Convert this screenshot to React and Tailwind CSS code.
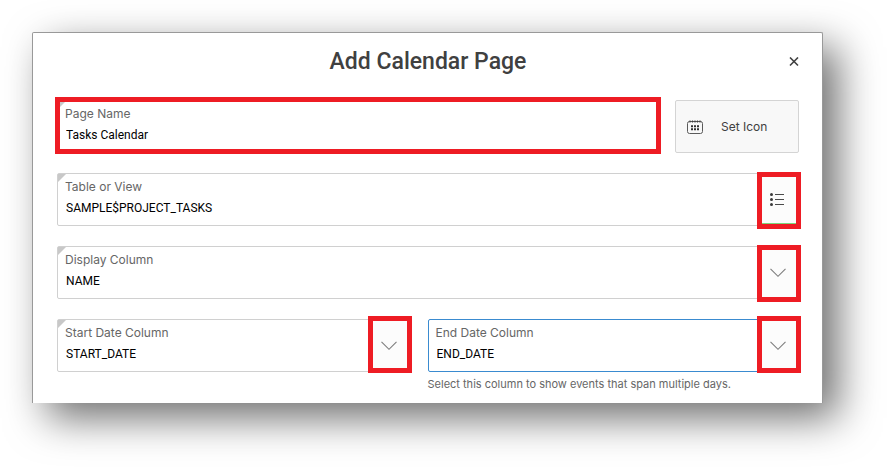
import React from 'react';

const sans = "font-['Inter','Liberation_Sans',sans-serif]";
const roboto = "font-['Roboto','Liberation_Sans',sans-serif]";

function Chevron() {
  return (
    <svg width="16" height="10" viewBox="0 0 16 10" fill="none" stroke="#7d7d7d" strokeWidth="1.1" aria-hidden="true">
      <path d="M0.5 0.8 L8 8.3 L15.5 0.8" />
    </svg>
  );
}

function ListIcon() {
  return (
    <svg width="16" height="14" viewBox="0 0 16 14" aria-hidden="true">
      <g fill="#3a3a3a">
        <circle cx="1.5" cy="2.5" r="1.5" />
        <circle cx="1.5" cy="7.5" r="1.5" />
        <circle cx="1.5" cy="12.5" r="1.5" />
      </g>
      <path d="M5 2.5H14M5 7.5H14M5 12.5H14" stroke="#4a4a4a" strokeWidth="1" fill="none" />
    </svg>
  );
}

function CalendarIcon() {
  return (
    <svg width="16" height="14" viewBox="0 0 16 14" fill="none" aria-hidden="true">
      <rect x="0.5" y="1.5" width="15" height="12" rx="2" stroke="#5a5a5a" strokeWidth="1" />
      <path d="M3 0.5V2.6M5.5 0.5V2.6M8 0.5V2.6M10.5 0.5V2.6M13 0.5V2.6" stroke="#404040" strokeWidth="1.2" />
      <path d="M4 6.2H12M4 9.2H12" stroke="#303030" strokeWidth="2" strokeDasharray="2 1" />
    </svg>
  );
}

function Highlight({ className }) {
  return <span aria-hidden="true" className={`pointer-events-none absolute border-5 border-[#ee1c24] ${className}`} />;
}

function Field({ id, label, value, kind = 'text', required = true, active = false, addon, addonStyle = '', highlight, help }) {
  const control = `${roboto} block h-6 w-full appearance-none bg-transparent px-2 text-xs text-black outline-none`;
  return (
    <div className="min-w-0 flex-1">
      <div
        className={`relative flex rounded-xs border bg-white ${
          active ? 'border-[#3a8bd0]' : 'border-[#d0d0d0]'
        }`}
      >
        {required && (
          <span
            aria-hidden="true"
            className="absolute top-0 left-0 border-t-8 border-r-8 border-t-[#c8c8c8] border-r-transparent"
          />
        )}
        <div className="flex min-w-0 flex-1 flex-col gap-px py-[5px]">
          <label htmlFor={id} className="block px-[7px] text-xs leading-4 text-[#666]">
            {label}
          </label>
          {kind === 'select' ? (
            <select id={id} defaultValue={value} className={control}>
              <option>{value}</option>
            </select>
          ) : (
            <input id={id} type="text" defaultValue={value} className={control} />
          )}
        </div>
        {addon && (
          <button
            type="button"
            aria-label={`Choose ${label}`}
            className={`flex w-10 items-center justify-center bg-[#fcfcfc] ${addonStyle}`}
          >
            {addon}
          </button>
        )}
        {highlight && <Highlight className={highlight} />}
      </div>
      {help && <p className="mt-1 text-[11px] leading-4 text-[#666]">{help}</p>}
    </div>
  );
}

const upperHighlight = '-top-0.5 -right-[3px] -bottom-1 w-11';
const lowerHighlight = '-top-1 -right-[3px] -bottom-0.5 w-11';

export default function App() {
  return (
    <main className={`${sans} overflow-hidden bg-white pt-8 pr-[65px] pb-16 pl-8`}>
      <section
        role="dialog"
        aria-labelledby="dialog-title"
        className="rounded-t-xs border border-b-0 border-[#999] bg-white pr-[23px] pb-[11px] pl-6 shadow-[15px_15px_40px_rgba(0,0,0,0.57)]"
      >
        <header className="flex items-center pt-[13px] pb-[22px]">
          <span className="w-6" />
          <h1 id="dialog-title" className={`${roboto} flex-1 text-center text-[23px] leading-8 font-medium text-[#404040]`}>
            Add Calendar Page
          </h1>
          <button type="button" aria-label="Close" className="flex w-6 justify-end">
            <svg width="10" height="10" viewBox="0 0 10 10" stroke="#404040" strokeWidth="1.6" aria-hidden="true">
              <path d="M1 0.5L9 8.5M9 0.5L1 8.5" />
            </svg>
          </button>
        </header>
        <form className="flex flex-col gap-5">
          <div className="flex gap-4">
            <Field
              id="page-name"
              label="Page Name"
              value="Tasks Calendar"
              highlight="-top-1 -right-[3px] -bottom-0.5 -left-[3px]"
            />
            <button
              type="button"
              className="flex w-31 items-center gap-[18px] rounded-xs border border-[#d4d4d4] bg-[#f8f8f8] pl-[11px] text-xs text-[#404040]"
            >
              <CalendarIcon />
              Set Icon
            </button>
          </div>
          <Field
            id="table"
            label="Table or View"
            value="SAMPLE$PROJECT_TASKS"
            addon={<ListIcon />}
            addonStyle="border-b-2 border-[#7bd67b]"
            highlight={upperHighlight}
          />
          <Field
            id="display"
            label="Display Column"
            value="NAME"
            kind="select"
            addon={<Chevron />}
            highlight={upperHighlight}
          />
          <div className="grid grid-cols-[353fr_372fr] gap-[18px]">
            <Field
              id="start"
              label="Start Date Column"
              value="START_DATE"
              kind="select"
              addon={<Chevron />}
              highlight={lowerHighlight}
            />
            <Field
              id="end"
              label="End Date Column"
              value="END_DATE"
              kind="select"
              required={false}
              active
              addon={<Chevron />}
              highlight={lowerHighlight}
              help="Select this column to show events that span multiple days."
            />
          </div>
        </form>
      </section>
    </main>
  );
}
